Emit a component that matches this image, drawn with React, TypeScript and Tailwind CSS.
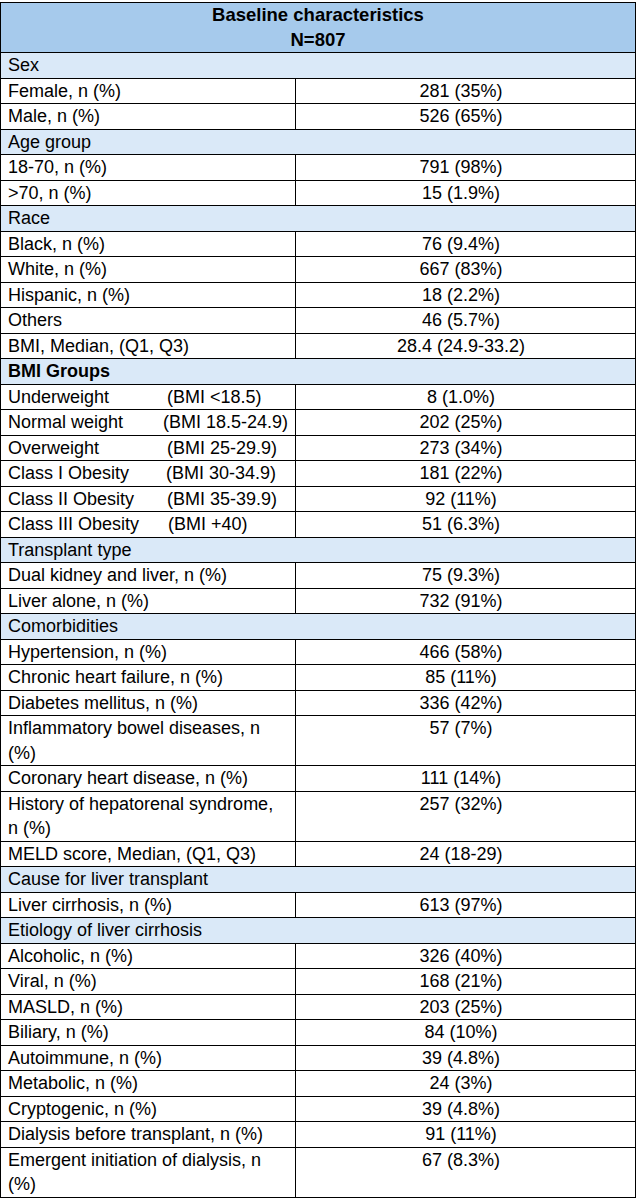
import type { ReactNode } from 'react';

interface SectionRow {
  kind: 'section';
  label: string;
  bold?: boolean;
}

interface DataRow {
  kind: 'data';
  label: ReactNode;
  value: string;
}

type Row = SectionRow | DataRow;

// BMI group labels: the range sits at a tab stop, which drifts a bit per row
const bmi = (name: string, range: string, width: string) => (
  <span className="flex whitespace-nowrap">
    <span className={width}>{name}</span>
    <span>{range}</span>
  </span>
);

const wrap = (first: string, second: string) => (
  <>
    {first}
    <br />
    {second}
  </>
);

const rows: Row[] = [
  { kind: 'section', label: 'Sex' },
  { kind: 'data', label: 'Female, n (%)', value: '281 (35%)' },
  { kind: 'data', label: 'Male, n (%)', value: '526 (65%)' },
  { kind: 'section', label: 'Age group' },
  { kind: 'data', label: '18-70, n (%)', value: '791 (98%)' },
  { kind: 'data', label: '>70, n (%)', value: '15 (1.9%)' },
  { kind: 'section', label: 'Race' },
  { kind: 'data', label: 'Black, n (%)', value: '76 (9.4%)' },
  { kind: 'data', label: 'White, n (%)', value: '667 (83%)' },
  { kind: 'data', label: 'Hispanic, n (%)', value: '18 (2.2%)' },
  { kind: 'data', label: 'Others', value: '46 (5.7%)' },
  { kind: 'data', label: 'BMI, Median, (Q1, Q3)', value: '28.4 (24.9-33.2)' },
  { kind: 'section', label: 'BMI Groups', bold: true },
  { kind: 'data', label: bmi('Underweight', '(BMI <18.5)', 'w-[159px]'), value: '8 (1.0%)' },
  { kind: 'data', label: bmi('Normal weight', '(BMI 18.5-24.9)', 'w-[155px]'), value: '202 (25%)' },
  { kind: 'data', label: bmi('Overweight', '(BMI 25-29.9)', 'w-[159px]'), value: '273 (34%)' },
  { kind: 'data', label: bmi('Class I Obesity', '(BMI 30-34.9)', 'w-[158px]'), value: '181 (22%)' },
  { kind: 'data', label: bmi('Class II Obesity', '(BMI 35-39.9)', 'w-[159px]'), value: '92 (11%)' },
  { kind: 'data', label: bmi('Class III Obesity', '(BMI +40)', 'w-[160px]'), value: '51 (6.3%)' },
  { kind: 'section', label: 'Transplant type' },
  { kind: 'data', label: 'Dual kidney and liver, n (%)', value: '75 (9.3%)' },
  { kind: 'data', label: 'Liver alone, n (%)', value: '732 (91%)' },
  { kind: 'section', label: 'Comorbidities' },
  { kind: 'data', label: 'Hypertension, n (%)', value: '466 (58%)' },
  { kind: 'data', label: 'Chronic heart failure, n (%)', value: '85 (11%)' },
  { kind: 'data', label: 'Diabetes mellitus, n (%)', value: '336 (42%)' },
  { kind: 'data', label: wrap('Inflammatory bowel diseases, n', '(%)'), value: '57 (7%)' },
  { kind: 'data', label: 'Coronary heart disease, n (%)', value: '111 (14%)' },
  { kind: 'data', label: wrap('History of hepatorenal syndrome,', 'n (%)'), value: '257 (32%)' },
  { kind: 'data', label: 'MELD score, Median, (Q1, Q3)', value: '24 (18-29)' },
  { kind: 'section', label: 'Cause for liver transplant' },
  { kind: 'data', label: 'Liver cirrhosis, n (%)', value: '613 (97%)' },
  { kind: 'section', label: 'Etiology of liver cirrhosis' },
  { kind: 'data', label: 'Alcoholic, n (%)', value: '326 (40%)' },
  { kind: 'data', label: 'Viral, n (%)', value: '168 (21%)' },
  { kind: 'data', label: 'MASLD, n (%)', value: '203 (25%)' },
  { kind: 'data', label: 'Biliary, n (%)', value: '84 (10%)' },
  { kind: 'data', label: 'Autoimmune, n (%)', value: '39 (4.8%)' },
  { kind: 'data', label: 'Metabolic, n (%)', value: '24 (3%)' },
  { kind: 'data', label: 'Cryptogenic, n (%)', value: '39 (4.8%)' },
  { kind: 'data', label: 'Dialysis before transplant, n (%)', value: '91 (11%)' },
  { kind: 'data', label: wrap('Emergent initiation of dialysis, n', '(%)'), value: '67 (8.3%)' },
];

const App = () => {
  return (
    <div className="min-h-[1203px] bg-white pt-[2px] font-['Liberation_Sans',Arial,sans-serif] text-[18px] leading-[24.5px] text-black">
      <div className="w-[636px] border border-black">
        {/* Title */}
        <div className="border-b border-black bg-[#a6caec] text-center text-[18.5px] font-bold">
          <div>Baseline characteristics</div>
          <div>N=807</div>
        </div>

        {rows.map((row, i) => {
          const last = i === rows.length - 1;
          if (row.kind === 'section') {
            return (
              <div
                key={i}
                className={`bg-[#dae9f8] pl-[7px] ${last ? '' : 'border-b border-black'} ${row.bold ? 'font-bold' : ''}`}
              >
                {row.label}
              </div>
            );
          }
          return (
            <div key={i} className={`flex ${last ? '' : 'border-b border-black'}`}>
              <div className="w-[295px] shrink-0 whitespace-nowrap border-r border-black pl-[7px]">
                {row.label}
              </div>
              <div className="flex-1 pr-[9px] text-center">{row.value}</div>
            </div>
          );
        })}
      </div>
    </div>
  );
};

export default App;
